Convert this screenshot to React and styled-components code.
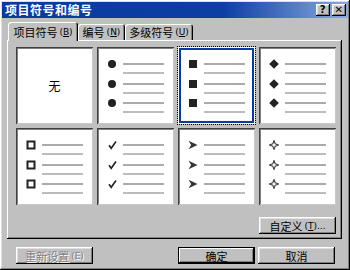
import styled, { createGlobalStyle, css } from "styled-components";

const GlobalStyle = createGlobalStyle`
  html, body {
    margin: 0;
    padding: 0;
    background: #c0c0c0;
  }
  body {
    font-family: "Noto Sans CJK SC", "DejaVu Sans", sans-serif;
    font-size: 12px;
  }
`;

const raised = css`
  box-shadow: inset -1px -1px #000, inset 1px 1px #fff, inset -2px -2px #808080,
    inset 2px 2px #dfdfdf;
`;

const Window = styled.div`
  box-sizing: border-box;
  width: 350px;
  height: 270px;
  padding: 2px;
  background: #c0c0c0;
  ${raised};
  display: flex;
  flex-direction: column;
`;

const TitleBar = styled.div`
  height: 16px;
  display: flex;
  align-items: center;
  justify-content: space-between;
  padding: 0 2px 0 3px;
  background: linear-gradient(to right, #0a3a9e 0%, #0c3ea4 64%, #8aaade 100%);
  color: #fff;
  font-size: 12px;
  font-weight: bold;
  letter-spacing: 0.5px;
  line-height: 16px;
`;

const TitleButtons = styled.div`
  display: flex;
`;

const TitleButton = styled.div`
  box-sizing: border-box;
  width: 14px;
  height: 12px;
  background: #c0c0c0;
  ${raised};
  display: flex;
  align-items: center;
  justify-content: center;
  color: #000;
  font-family: "DejaVu Sans", sans-serif;
  font-size: 10px;
  font-weight: bold;
  line-height: 1;
  margin-left: ${(p) => (p.$gap ? "2px" : "0")};
`;

const Content = styled.div`
  display: flex;
  flex-direction: column;
  padding: 4px 6px 0 5px;
`;

const TabRow = styled.div`
  display: flex;
  align-items: flex-end;
  height: 18px;
  padding-left: 1px;
  position: relative;
  z-index: 1;
`;

const Tab = styled.div`
  box-sizing: border-box;
  height: ${(p) => (p.$active ? "19px" : "16px")};
  margin-bottom: ${(p) => (p.$active ? "-1px" : "0")};
  width: ${(p) => p.$w}px;
  background: #c0c0c0;
  border-top-left-radius: 3px;
  border-top-right-radius: 3px;
  box-shadow: inset 1px 1px #fff, inset -1px 0 #000, inset -2px 0 #808080;
  display: flex;
  align-items: center;
  justify-content: center;
  font-size: 11px;
  white-space: nowrap;
  color: #000;
`;

const Mnemonic = styled.span`
  font-family: "DejaVu Sans", sans-serif;
  font-size: 9px;
  margin-left: 2px;
`;

const Panel = styled.div`
  box-sizing: border-box;
  height: 199px;
  padding: 7px 6px 0 9px;
  background: #c0c0c0;
  box-shadow: inset -1px -1px #000, inset 1px 1px #fff, inset -2px -2px #808080;
  display: flex;
  flex-direction: column;
`;

const Grid = styled.div`
  display: grid;
  grid-template-columns: repeat(4, 77px);
  grid-auto-rows: 77px;
  column-gap: 4px;
  row-gap: 4px;
`;

const Cell = styled.div`
  box-sizing: border-box;
  background: #fff;
  box-shadow: inset 1px 1px #404040, inset -1px -1px #c8c8c8, inset 2px 2px #808080;
  display: flex;
  flex-direction: column;
  padding: 13px 0 0 10px;
  ${(p) =>
    p.$selected &&
    css`
      outline: 1px dotted #000;
      box-shadow: inset 0 0 0 1px #fff, inset 0 0 0 3px #0a3aa8;
    `}
`;

const EmptyLabel = styled.div`
  flex: 1;
  display: flex;
  align-items: center;
  justify-content: center;
  padding: 0 10px 13px 0;
  font-size: 12px;
  color: #000;
`;

const Item = styled.div`
  display: flex;
  align-items: flex-start;
  height: 19.5px;
`;

const Bullet = styled.svg`
  width: 10px;
  height: 10px;
  margin-top: -1px;
  flex: none;
`;

const Lines = styled.div`
  display: flex;
  flex-direction: column;
  margin-left: 6px;
  padding-top: 3px;
  gap: 7px;
`;

const Line = styled.div`
  width: 41px;
  height: 2px;
  background: ${(p) => (p.$light ? "#bcbcbc" : "#ababab")};
`;

const CustomRow = styled.div`
  display: flex;
  justify-content: flex-end;
  margin-top: 12px;
`;

const Button = styled.div`
  box-sizing: border-box;
  width: 77px;
  height: 17px;
  background: #c0c0c0;
  display: flex;
  align-items: center;
  justify-content: center;
  font-size: 11px;
  white-space: nowrap;
  color: ${(p) => (p.$disabled ? "#808080" : "#000")};
  text-shadow: ${(p) => (p.$disabled ? "1px 1px #fff" : "none")};
  ${(p) =>
    p.$default
      ? css`
          box-shadow: inset 0 0 0 1px #000, inset -2px -2px #000, inset 2px 2px #fff,
            inset -3px -3px #808080;
        `
      : raised};
`;

const BottomRow = styled.div`
  display: flex;
  align-items: center;
  margin-top: 8px;
  padding: 0 7px 0 9px;
`;

const RightGroup = styled.div`
  display: flex;
  gap: 3px;
  margin-left: auto;
`;

const ink = "#222";

const shapes = {
  dot: <circle cx="5" cy="5" r="4" fill={ink} />,
  square: <rect x="1" y="1" width="8" height="8" fill={ink} />,
  diamond: <polygon points="5,0.2 9.8,5 5,9.8 0.2,5" fill={ink} />,
  box: (
    <rect x="1.5" y="1.5" width="7" height="7" fill="#fff" stroke={ink} strokeWidth="2" />
  ),
  check: (
    <path d="M2 5.2 L4.2 8.3 L9 1.5" fill="none" stroke={ink} strokeWidth="1.6" />
  ),
  arrow: <polygon points="0.5,0.8 9.5,5 0.5,9.2 3.2,5" fill="#333" />,
  star: (
    <path
      d="M5 0.5 L6.2 3.8 L9.5 5 L6.2 6.2 L5 9.5 L3.8 6.2 L0.5 5 L3.8 3.8 Z"
      fill="#fff"
      stroke="#444"
      strokeWidth="1.1"
    />
  ),
};

function BulletCell({ shape, selected }) {
  return (
    <Cell $selected={selected}>
      {[0, 1, 2].map((i) => (
        <Item key={i}>
          <Bullet viewBox="0 0 10 10">{shapes[shape]}</Bullet>
          <Lines>
            <Line />
            <Line $light />
          </Lines>
        </Item>
      ))}
    </Cell>
  );
}

export default function App() {
  return (
    <>
      <GlobalStyle />
      <Window>
        <TitleBar>
          <span>项目符号和编号</span>
          <TitleButtons>
            <TitleButton>?</TitleButton>
            <TitleButton $gap>✕</TitleButton>
          </TitleButtons>
        </TitleBar>
        <Content>
          <TabRow>
            <Tab $active $w={70}>
              项目符号<Mnemonic>(<u>B</u>)</Mnemonic>
            </Tab>
            <Tab $w={47}>
              编号<Mnemonic>(<u>N</u>)</Mnemonic>
            </Tab>
            <Tab $w={68}>
              多级符号<Mnemonic>(<u>U</u>)</Mnemonic>
            </Tab>
          </TabRow>
          <Panel>
            <Grid>
              <Cell>
                <EmptyLabel>无</EmptyLabel>
              </Cell>
              <BulletCell shape="dot" />
              <BulletCell shape="square" selected />
              <BulletCell shape="diamond" />
              <BulletCell shape="box" />
              <BulletCell shape="check" />
              <BulletCell shape="arrow" />
              <BulletCell shape="star" />
            </Grid>
            <CustomRow>
              <Button>
                自定义<Mnemonic>(<u>T</u>)...</Mnemonic>
              </Button>
            </CustomRow>
          </Panel>
          <BottomRow>
            <Button $disabled>
              重新设置<Mnemonic>(E)</Mnemonic>
            </Button>
            <RightGroup>
              <Button $default>确定</Button>
              <Button>取消</Button>
            </RightGroup>
          </BottomRow>
        </Content>
      </Window>
    </>
  );
}
